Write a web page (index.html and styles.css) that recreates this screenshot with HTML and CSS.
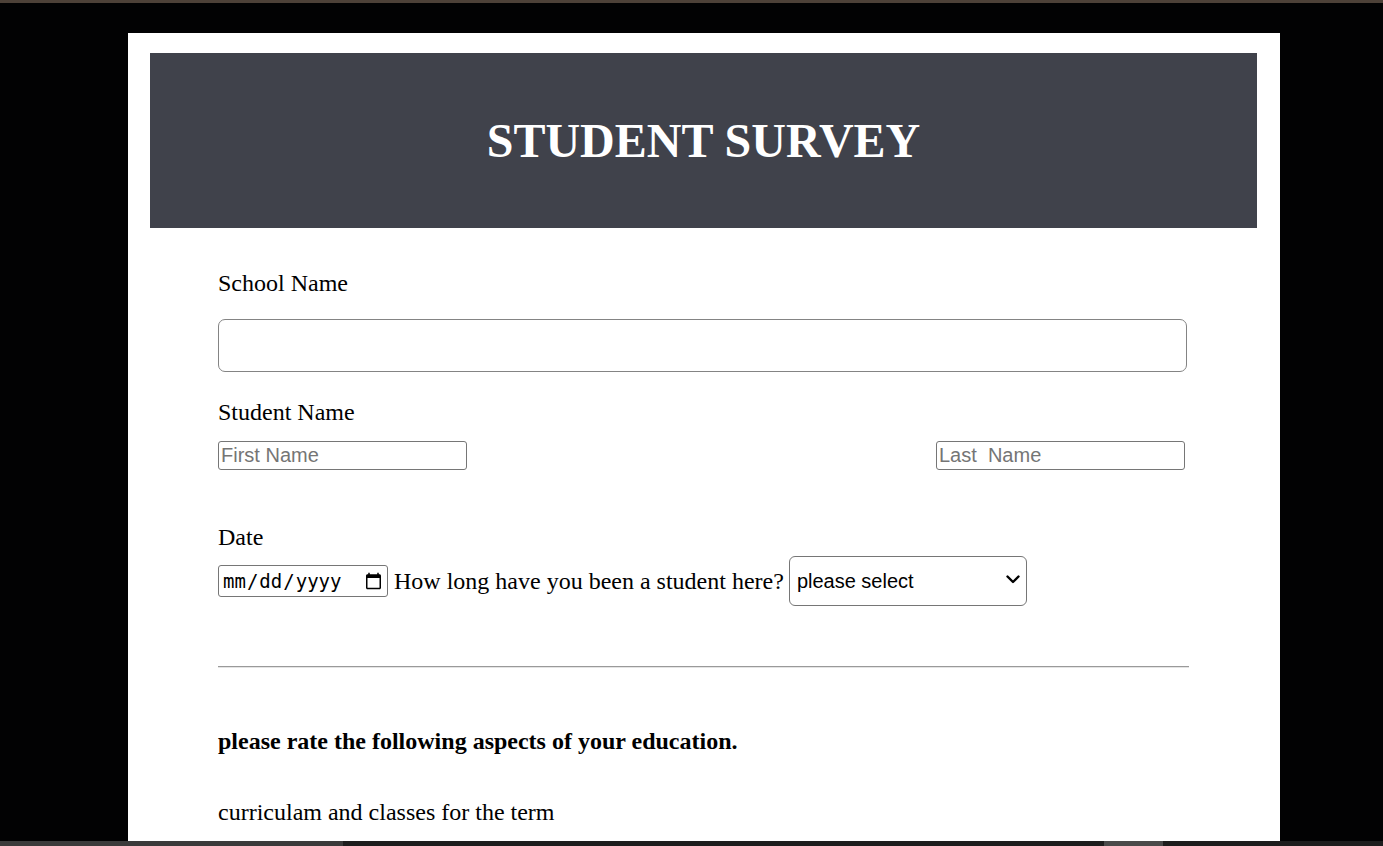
FILE: index.html
```html
<!DOCTYPE html>
<html lang="en">
<head>
<meta charset="utf-8">
<title>Student Survey</title>
<link rel="stylesheet" href="styles.css">
</head>
<body>
<div class="topbar"></div>
<div class="viewport">
  <div class="card">
    <header class="banner">
      <h1 class="title">STUDENT SURVEY</h1>
    </header>
    <form class="survey">
      <label class="field-label first-label" for="school">School Name</label>
      <input class="school-input" id="school" type="text">

      <div class="field-label student-label">Student Name</div>
      <div class="name-row">
        <input class="name-input" type="text" placeholder="First Name">
        <input class="name-input" type="text" placeholder="Last  Name">
      </div>

      <label class="field-label date-label" for="date">Date</label>
      <div class="date-row">
        <input class="date-input" id="date" type="date">
        <span class="question">How long have you been a student here?</span>
        <span class="select-wrap">
          <select class="duration-select">
            <option>please select</option>
            <option>less than 1 year</option>
            <option>1-2 years</option>
            <option>3+ years</option>
          </select>
          <svg class="chevron" width="14" height="9" viewBox="0 0 14 9" aria-hidden="true">
            <path d="M1.5 1.5 L7 7 L12.5 1.5" fill="none" stroke="#000" stroke-width="2.4" stroke-linecap="round" stroke-linejoin="round"/>
          </svg>
        </span>
      </div>

      <hr class="divider">

      <p class="rate-heading">please rate the following aspects of your education.</p>
      <p class="rate-item">curriculam and classes for the term</p>
    </form>
  </div>
</div>
<div class="statusbar">
  <div class="seg seg-light seg-a"></div>
  <div class="seg seg-dark seg-b"></div>
  <div class="seg seg-light seg-c"></div>
  <div class="seg seg-dark seg-d"></div>
</div>
</body>
</html>
```
FILE: styles.css
```css
html, body {
  margin: 0;
  padding: 0;
}

body {
  width: 1383px;
  height: 846px;
  overflow: hidden;
  background: #020203;
  display: flex;
  flex-direction: column;
  font-family: "Liberation Serif", "Times New Roman", serif;
  color: #000;
}

.topbar {
  height: 3px;
  flex: none;
  background: #4d4138;
}

.viewport {
  flex: 1;
  min-height: 0;
  overflow: hidden;
  padding: 30px 0 0 128px;
}

.card {
  width: 1152px;
  height: 100%;
  box-sizing: border-box;
  background: #fff;
  padding: 20px 23px 0 22px;
  overflow: hidden;
}

.banner {
  height: 175px;
  background: #40424b;
  display: flex;
  align-items: center;
  justify-content: center;
}

.title {
  margin: 0;
  font-family: "Liberation Serif", "Times New Roman", serif;
  font-size: 48px;
  font-weight: bold;
  line-height: 56px;
  color: #fff;
}

.survey {
  margin-left: 68px;
  width: 971px;
  display: flex;
  flex-direction: column;
  align-items: flex-start;
}

.field-label {
  display: block;
  font-size: 24px;
  line-height: 28px;
}

.first-label { margin-top: 41px; }
.student-label { margin-top: 26px; }
.date-label { margin-top: 53px; }

.school-input {
  margin: 22px 0 0;
  width: 969px;
  height: 53px;
  box-sizing: border-box;
  border: 1px solid #848484;
  border-radius: 7px;
  padding: 0 8px;
  font-family: "Liberation Sans", Arial, sans-serif;
  font-size: 20px;
  background: #fff;
}

.name-row {
  margin-top: 15px;
  width: 967px;
  display: flex;
  justify-content: space-between;
}

.name-input {
  margin: 0;
  width: 249px;
  height: 29px;
  box-sizing: border-box;
  border: 1px solid #767676;
  border-radius: 3px;
  padding: 0 2px;
  font-family: "Liberation Sans", Arial, sans-serif;
  font-size: 20px;
  color: #000;
  background: #fff;
}

.name-input::placeholder {
  color: #757575;
}

.date-row {
  margin-top: 5px;
  height: 50px;
  display: flex;
  align-items: center;
  gap: 5px;
}

.date-input {
  margin: 0 1px 0 0;
  width: 170px;
  height: 32px;
  box-sizing: border-box;
  border: 1px solid #767676;
  border-radius: 3px;
  padding: 0 2px 0 3px;
  font-family: "DejaVu Sans Mono", "Liberation Mono", monospace;
  font-size: 19px;
  color: #000;
  background: #fff;
}

.question {
  font-size: 24px;
  line-height: 28px;
  white-space: nowrap;
}

.select-wrap {
  position: relative;
  display: block;
  width: 238px;
  height: 50px;
}

.duration-select {
  -webkit-appearance: none;
  appearance: none;
  margin: 0;
  width: 238px;
  height: 50px;
  box-sizing: border-box;
  border: 1px solid #767676;
  border-radius: 6px;
  padding: 0 30px 0 7px;
  font-family: "Liberation Sans", Arial, sans-serif;
  font-size: 20px;
  color: #000;
  background: #fff;
}

.chevron {
  position: absolute;
  right: 7px;
  top: 19px;
  pointer-events: none;
}

.divider {
  margin: 60px 0 0;
  width: 971px;
  height: 0;
  border: 0;
  border-top: 1px solid #9a9a9a;
  border-bottom: 1px solid #e4e4e4;
}

.rate-heading {
  margin: 59px 0 0;
  font-size: 24px;
  line-height: 28px;
  font-weight: bold;
}

.rate-item {
  margin: 43px 0 0;
  font-size: 24px;
  line-height: 28px;
}

.statusbar {
  height: 5px;
  flex: none;
  display: flex;
}

.seg { height: 100%; }
.seg-light { background: #3b3b3b; }
.seg-dark { background: #1d1d1d; }
.seg-a { width: 343px; }
.seg-b { width: 761px; }
.seg-c { width: 59px; background: #4a4a4a; }
.seg-d { flex: 1; }
```
